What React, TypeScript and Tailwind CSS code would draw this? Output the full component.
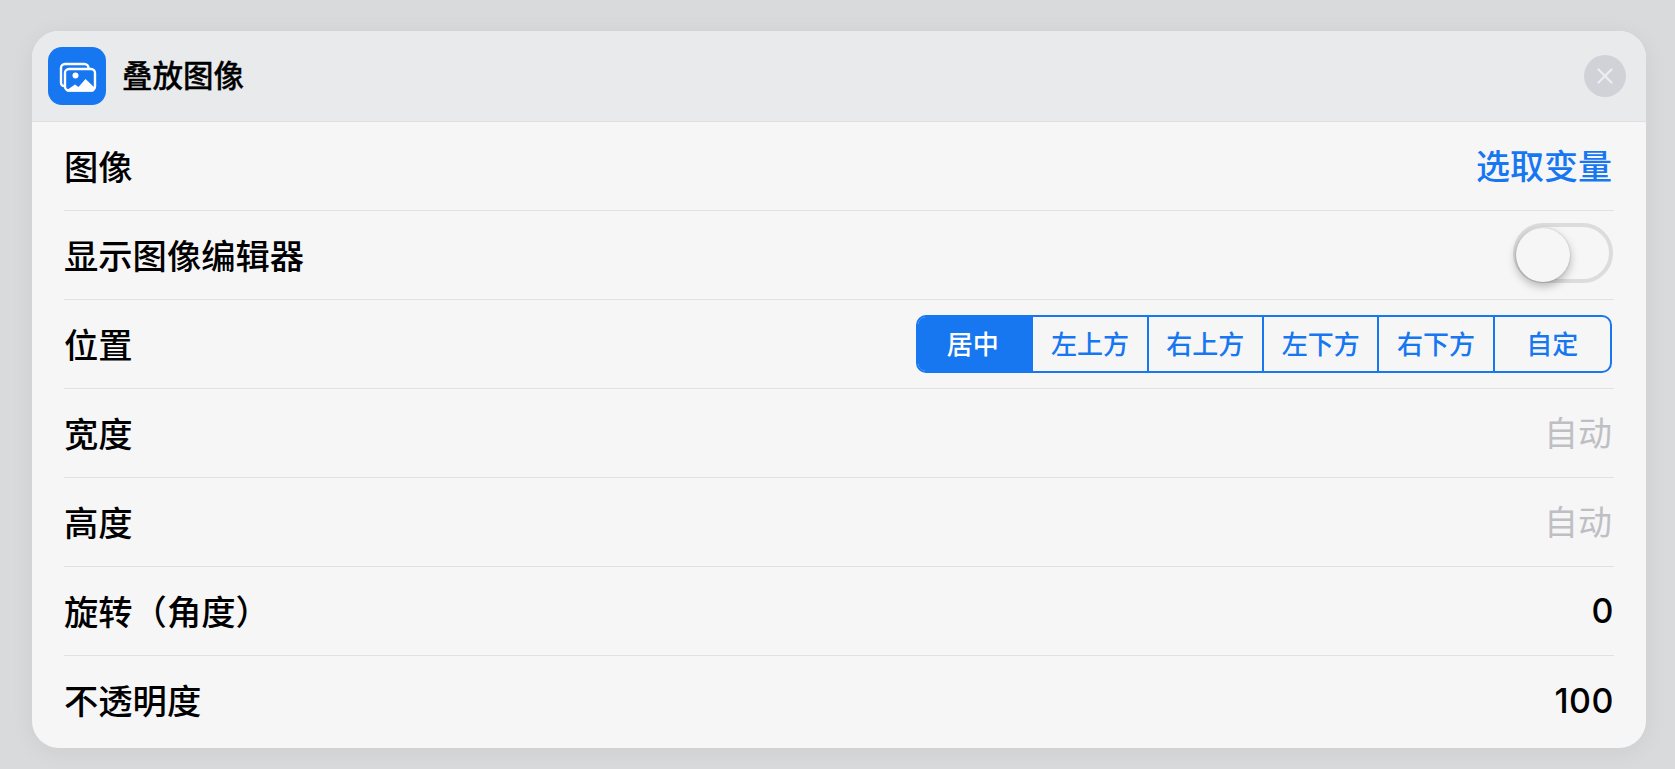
import { X } from "lucide-react";

const cjk = "font-['Inter','Noto_Sans_CJK_SC',sans-serif]";
const positions = ["居中", "左上方", "右上方", "左下方", "右下方", "自定"];

function StackIcon() {
  return (
    <svg viewBox="0 0 58 58" className="size-[58px]" aria-hidden>
      <path
        d="M16.5 39h-.5a3 3 0 0 1-3-3V21a4 4 0 0 1 4-4h19.5a4 4 0 0 1 4 4"
        fill="none"
        stroke="#fff"
        strokeWidth="2.4"
        strokeLinecap="round"
      />
      <rect x="17" y="22" width="30" height="21.5" rx="4" fill="none" stroke="#fff" strokeWidth="2.4" />
      <circle cx="27.5" cy="28.5" r="3" fill="#fff" />
      <path d="M19 43l8-5.5 3.5 2.5L37.5 32 46 40v3.5a1 1 0 0 1-1 1H19z" fill="#fff" />
    </svg>
  );
}

function Row({ label, children, last }: { label: string; children?: React.ReactNode; last?: boolean }) {
  return (
    <div className={`flex h-[89px] items-center justify-between ${last ? "" : "border-b border-[#e1e1e3]"}`}>
      <span className="pt-[4px] text-[34.3px] leading-none font-medium text-black">{label}</span>
      {children}
    </div>
  );
}

export default function App() {
  return (
    <div className={`min-h-[769px] bg-[#d9dadc] pt-[31px] pr-[29px] pl-[32px] ${cjk}`}>
      <div className="h-[717px] overflow-hidden rounded-[27px] bg-[#f6f6f7] shadow-[0_4px_24px_rgba(0,0,0,0.06)]">
        <div className="flex h-[91px] items-center border-b border-[#dfdfe1] bg-[#e9eaec] pr-[20px] pl-[16px]">
          <div className="flex size-[58px] items-center justify-center rounded-[14px] bg-[#1677f1]">
            <StackIcon />
          </div>
          <span className="ml-[16px] text-[30.5px] leading-none font-medium text-black [-webkit-text-stroke:0.3px_black]">
            叠放图像
          </span>
          <div className="ml-auto flex size-[42px] items-center justify-center rounded-full bg-[#d0d2d7]">
            <X className="size-[26px] text-[#eceef0]" strokeWidth={2} />
          </div>
        </div>
        <div className="pr-[32px] pl-[32px]">
          <Row label="图像">
            <span className="mr-[2px] pt-[1px] text-[34px] leading-none font-medium text-[#1677f1]">选取变量</span>
          </Row>
          <Row label="显示图像编辑器">
            <div className="relative mr-[1px] -mt-[4px] h-[60px] w-[100px] rounded-full border-[4px] border-[#dcdcdd]">
              <div className="absolute top-[1px] left-[-1px] size-[54px] rounded-full bg-[#f6f6f7] shadow-[0_4px_10px_rgba(0,0,0,0.28),0_0_2px_rgba(0,0,0,0.2)]" />
            </div>
          </Row>
          <Row label="位置">
            <div className="mr-[2px] grid h-[58px] w-[696px] grid-cols-6 overflow-hidden rounded-[10px] border-2 border-[#1677f1]">
              {positions.map((p, i) => (
                <div
                  key={p}
                  className={`flex items-center justify-center pt-[2px] text-[26px] leading-none font-medium ${
                    i === 0 ? "bg-[#1677f1] pr-[4px] text-white" : "text-[#1677f1]"
                  } ${i < positions.length - 1 ? "border-r-2 border-[#1677f1]" : ""}`}
                >
                  {p}
                </div>
              ))}
            </div>
          </Row>
          <Row label="宽度">
            <span className="mr-[2px] pt-[1px] text-[34px] leading-none text-[#bfbfc3]">自动</span>
          </Row>
          <Row label="高度">
            <span className="mr-[2px] pt-[1px] text-[34px] leading-none text-[#bfbfc3]">自动</span>
          </Row>
          <Row label="旋转（角度）">
            <span className="text-[34px] leading-none font-[550] tracking-[0.5px] text-black">0</span>
          </Row>
          <Row label="不透明度" last>
            <span className="text-[34px] leading-none font-[550] tracking-[0.5px] text-black">100</span>
          </Row>
        </div>
      </div>
    </div>
  );
}
